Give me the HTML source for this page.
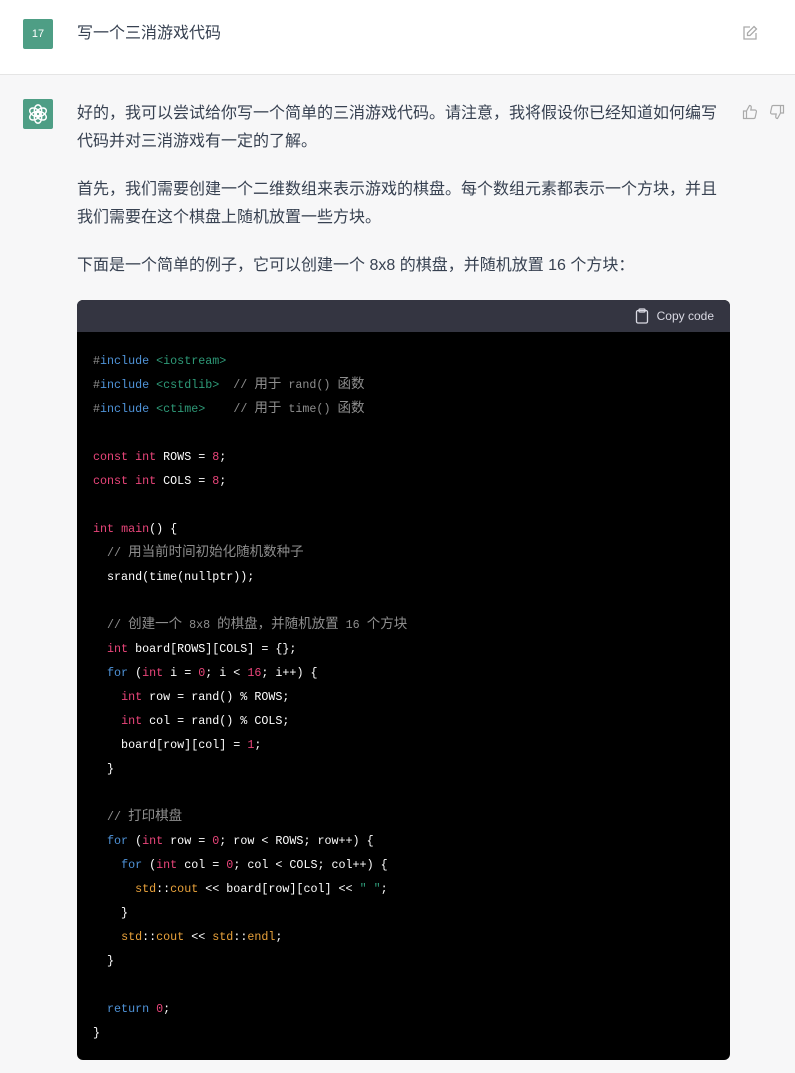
<!DOCTYPE html>
<html><head><meta charset="utf-8"><style>
*{margin:0;padding:0;box-sizing:border-box}
body{width:795px;height:1073px;overflow:hidden;background:#f7f7f8;font-family:"Liberation Sans","Noto Sans CJK SC",sans-serif;color:#374151}
.user{position:absolute;left:0;top:0;width:795px;height:75px;background:#fff;border-bottom:1px solid #e5e5e5}
.av{position:absolute;left:23px;width:30px;height:30px;border-radius:2px;background:#4e9e85;color:#fff;font-size:11px;display:flex;align-items:center;justify-content:center}
.ut{position:absolute;left:77px;top:22px;font-size:16px;line-height:24px}
.p{position:absolute;left:77px;width:650px;font-size:16px;line-height:28px}
.code{position:absolute;left:77px;top:300px;width:653px;height:760px;background:#000;border-radius:6px;overflow:hidden}
.ch{height:32px;background:#343541;color:#d9d9e3;font-size:12px;display:flex;align-items:center;justify-content:flex-end;padding-right:16px}
pre{padding:17px 16px 16px;font-family:"Liberation Mono","Noto Sans CJK SC",monospace;font-size:11.7px;line-height:24px;color:#fff}
.k{color:#e9457a}.b{color:#4f93d8}.g{color:#2e9a78}.c{color:#8e8e8e}.o{color:#e9a23b}.m{color:#8e8e8e}
.z{font-size:13.5px;line-height:10px}
</style></head><body>
<div class="user">
<div class="av" style="top:19px">17</div>
<div class="ut">写一个三消游戏代码</div>
<svg style="position:absolute;left:742px;top:25px" width="16" height="16" viewBox="0 0 16 16" fill="none" stroke="#aaa" stroke-width="1.3"><path d="M8 2H2v12h12V8"/><path d="M12 1.5l2.5 2.5L8 10.5H5.5V8z"/></svg>
</div>
<div class="av" style="top:99px"><svg width="22" height="22" viewBox="0 0 24 24" fill="none" stroke="#fff" stroke-width="1.6"><circle cx="12" cy="12" r="3.5"/><ellipse cx="12" cy="8" rx="4" ry="6"/><ellipse cx="12" cy="8" rx="4" ry="6" transform="rotate(60 12 12)"/><ellipse cx="12" cy="8" rx="4" ry="6" transform="rotate(120 12 12)"/><ellipse cx="12" cy="8" rx="4" ry="6" transform="rotate(180 12 12)"/><ellipse cx="12" cy="8" rx="4" ry="6" transform="rotate(240 12 12)"/><ellipse cx="12" cy="8" rx="4" ry="6" transform="rotate(300 12 12)"/></svg></div>
<svg style="position:absolute;left:742px;top:104px" width="16" height="16" viewBox="0 0 16 16" fill="none" stroke="#aaa" stroke-width="1.2"><path d="M1.5 7h3v7.5h-3zM4.5 7l3-5.5c1.5 0 2 1 1.7 2.5L8.8 6H13c1 0 1.6.9 1.4 1.8l-1.2 5.5c-.2.8-.8 1.2-1.5 1.2H4.5"/></svg>
<svg style="position:absolute;left:769px;top:104px" width="16" height="16" viewBox="0 0 16 16" fill="none" stroke="#aaa" stroke-width="1.2"><g transform="rotate(180 8 8)"><path d="M1.5 7h3v7.5h-3zM4.5 7l3-5.5c1.5 0 2 1 1.7 2.5L8.8 6H13c1 0 1.6.9 1.4 1.8l-1.2 5.5c-.2.8-.8 1.2-1.5 1.2H4.5"/></g></svg>
<div class="p" style="top:100px">好的，我可以尝试给你写一个简单的三消游戏代码。请注意，我将假设你已经知道如何编写代码并对三消游戏有一定的了解。</div>
<div class="p" style="top:176px">首先，我们需要创建一个二维数组来表示游戏的棋盘。每个数组元素都表示一个方块，并且我们需要在这个棋盘上随机放置一些方块。</div>
<div class="p" style="top:252px">下面是一个简单的例子，它可以创建一个 8x8 的棋盘，并随机放置 16 个方块：</div>
<div class="code">
<div class="ch"><svg width="14" height="16" viewBox="0 0 14 16" fill="none" stroke="#d9d9e3" stroke-width="1.3" style="margin-right:8px"><rect x="1.5" y="2.5" width="11" height="12.5" rx="1.5"/><rect x="4" y="1" width="6" height="3" rx="1"/></svg>Copy code</div>
<pre><span class="m">#</span><span class="b">include</span> <span class="g">&lt;iostream&gt;</span>
<span class="m">#</span><span class="b">include</span> <span class="g">&lt;cstdlib&gt;</span>  <span class="c">// <span class="z">用于</span> rand() <span class="z">函数</span></span>
<span class="m">#</span><span class="b">include</span> <span class="g">&lt;ctime&gt;</span>    <span class="c">// <span class="z">用于</span> time() <span class="z">函数</span></span>

<span class="k">const</span> <span class="k">int</span> ROWS = <span class="k">8</span>;
<span class="k">const</span> <span class="k">int</span> COLS = <span class="k">8</span>;

<span class="k">int</span> <span class="k">main</span>() {
  <span class="c">// <span class="z">用当前时间初始化随机数种子</span></span>
  srand(time(nullptr));

  <span class="c">// <span class="z">创建一个</span> 8x8 <span class="z">的棋盘，并随机放置</span> 16 <span class="z">个方块</span></span>
  <span class="k">int</span> board[ROWS][COLS] = {};
  <span class="b">for</span> (<span class="k">int</span> i = <span class="k">0</span>; i &lt; <span class="k">16</span>; i++) {
    <span class="k">int</span> row = rand() % ROWS;
    <span class="k">int</span> col = rand() % COLS;
    board[row][col] = <span class="k">1</span>;
  }

  <span class="c">// <span class="z">打印棋盘</span></span>
  <span class="b">for</span> (<span class="k">int</span> row = <span class="k">0</span>; row &lt; ROWS; row++) {
    <span class="b">for</span> (<span class="k">int</span> col = <span class="k">0</span>; col &lt; COLS; col++) {
      <span class="o">std</span>::<span class="o">cout</span> &lt;&lt; board[row][col] &lt;&lt; <span class="g">" "</span>;
    }
    <span class="o">std</span>::<span class="o">cout</span> &lt;&lt; <span class="o">std</span>::<span class="o">endl</span>;
  }

  <span class="b">return</span> <span class="k">0</span>;
}</pre>
</div>
</body></html>
